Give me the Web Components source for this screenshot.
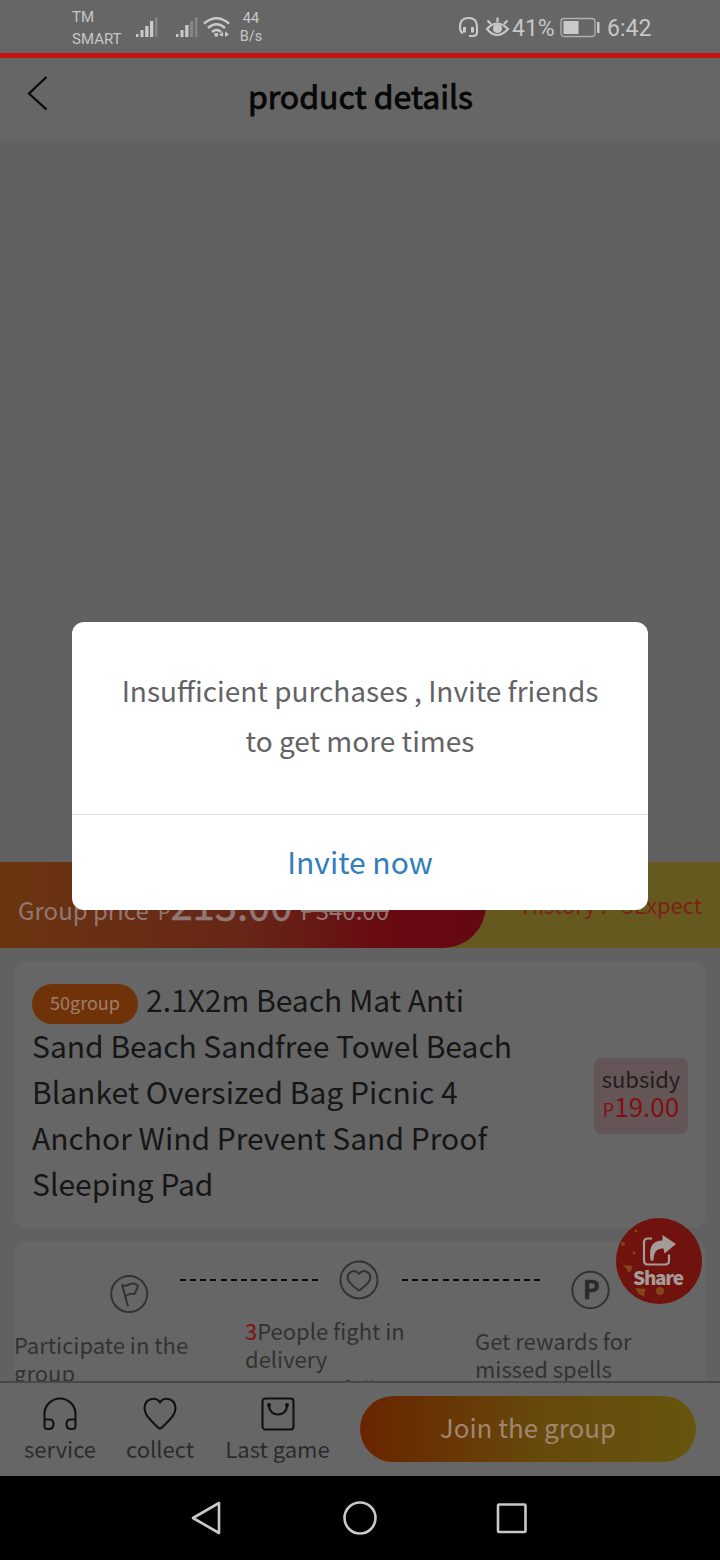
<!DOCTYPE html>
<html lang="en">
<head>
<meta charset="utf-8">
<title>product details</title>
<style>
body{margin:0;background:#666;font-family:"Noto Sans CJK SC","Noto Sans",sans-serif}
</style>
</head>
<body>
<phone-screen></phone-screen>
<script>
const define=(name,html)=>customElements.define(name,class extends HTMLElement{
  constructor(){
    super();
    const t=document.createElement('template');
    t.innerHTML=html;
    this.attachShadow({mode:'open'}).append(t.content.cloneNode(true));
  }
});

define('status-bar',`<style>
:host{display:flex;box-sizing:border-box;height:53px;padding-left:72px;background:#666;color:#c6c6c6;font:15px/22px Roboto,sans-serif;align-items:flex-start}
svg{display:block;flex:none}
.carrier{width:64px;padding-top:6px}
.speed{width:30px;text-align:center;font-size:14.5px;line-height:18px;padding-top:10px;margin-left:5px}
.big{font-size:23px;line-height:28px;padding-top:15px}
</style>
<div class="carrier">TM<br>SMART</div>
<svg width="24" height="53" fill="#c9c9c9"><path d="M0 34h2.500v3H0zM4.500 30h3v7h-3zM9.200 26h3.300v11H9.200zM14 21h3.300v16H14z"/><path fill="#858585" d="M19 17.500h2.500v19.500H19z"/></svg>
<svg width="24" height="53" style="margin-left:16px" fill="#c9c9c9"><path d="M0 34h2.500v3H0zM4.500 30h3v7h-3zM9.200 25h3.300v12H9.200z"/><path fill="#858585" d="M14 21h3.300v16H14zM19 17.500h2.500v19.500H19z"/></svg>
<svg width="28" height="53" style="margin-left:3px" fill="none" stroke="#c9c9c9" stroke-width="2.500"><path d="M1 23.500q12.500-10.500 25 0M5 28q8.500-7.500 17 0M9 32q4.500-4 9 0"/><path stroke="none" fill="#c9c9c9" d="M11.500 33h3.500v3.500h-3.500zM16 35l4-3.500v5zM22 31.500l4 2.800-4 2.700z"/></svg>
<div class="speed">44<br>B/s</div>
<svg width="22" height="53" style="margin-left:193px" fill="none" stroke="#c9c9c9" stroke-width="2.200"><path d="M4 33Q1 32 1 26.500Q1 18 9.500 18t8.500 8.500V32Q18 36 14 36H10"/><path stroke-width="3" d="M5.500 27v5.500M13.500 27v5.500"/></svg>
<svg width="24" height="53" style="margin-left:5px" fill="none" stroke="#c9c9c9" stroke-width="2.200"><path d="M1 29q10-11 21 0-11 12-21 0zM11.500 22v-4.500M5 24l-3.500-3.500M18 24l3.500-3.500"/><circle cx="11.500" cy="28.500" r="3.500" fill="#c9c9c9"/></svg>
<div class="big" style="width:48px;margin-left:2px">41%</div>
<svg width="40" height="53" fill="none" stroke="#b0b0b0" stroke-width="1.300"><rect x="1" y="18.500" width="34" height="18" rx="3"/><path fill="#c9c9c9" stroke="none" d="M3.500 21h15v13h-15zM37 22h2.500v11H37z"/></svg>
<div class="big" style="margin-left:7px">6:42</div>`);

define('page-header',`<style>
:host{display:flex;box-sizing:border-box;height:88px;border-top:5px solid #c5140f;background:#666;align-items:flex-start;color:#070707;position:relative}
svg{flex:none;margin:17px 0 0 26px}
h1{flex:1;margin:12px 49px 0 0;text-align:center;font-size:32px;line-height:50px;font-weight:400;-webkit-text-stroke:.9px #070707}
</style>
<svg width="24" height="38" fill="none" stroke="#0a0a0a" stroke-width="2.300"><path d="M20.500 2L3 18.500 20.500 34.500"/></svg>
<h1><slot></slot></h1>`);

define('price-bar',`<style>
:host{display:flex;height:86px;background:#66591f;color:#7d2118;line-height:44px}
.now{box-sizing:border-box;width:486px;padding:19px 0 0 18px;border-radius:0 44px 44px 0;background:linear-gradient(90deg,#6b3510 0%,#672617 50%,#680a12 80%,#640813);color:#917875;font-size:24px;white-space:nowrap;display:flex;align-items:baseline}
.p{font-size:20px;margin-left:9px}.n{font-size:40px;line-height:44px;-webkit-text-stroke:.5px #917875}
s{margin-left:8px;text-decoration:none;background:linear-gradient(#917875,#917875) 0 22px/100% 2px no-repeat}
.old{flex:1;text-align:right;padding:20px 18px 0 0;font-size:22px;white-space:pre}
</style>
<div class="now"><span>Group price</span><span class="p">P</span><span class="n">213.00</span><s>P340.00</s></div>
<div class="old">History :   3Expect</div>`);

define('subsidy-tag',`<style>
:host{display:block;flex:none;box-sizing:border-box;width:94px;height:76px;padding-top:6px;background:#645557;border-radius:8px;text-align:center;color:#241c1f;font-size:22px;line-height:28px}
div{color:#820f12;font-size:26px}small{font-size:18px}
</style><slot></slot><div><small>P</small>19.00</div>`);

define('product-card',`<style>
:host{display:flex;box-sizing:border-box;height:266px;margin:14px 14px 0;padding:14px 18px 0;background:#666;border-radius:12px;color:#161616;justify-content:space-between}
.t{width:490px;font-size:30px;line-height:46px}
.b{display:inline-block;vertical-align:top;width:106px;height:40px;margin:8px 8px -4px 0;border-radius:20px;background:#703309;color:#a07e68;font-size:18px;line-height:36px;text-align:center}
subsidy-tag{margin-top:82px}
</style>
<div class="t"><span class="b">50group</span><slot></slot></div><subsidy-tag>subsidy</subsidy-tag>`);

define('group-steps',`<style>
:host{display:grid;grid-template-columns:166px 138px 84px 138px 166px;box-sizing:border-box;height:139px;margin:14px 14px 0;overflow:hidden;background:#666;border-radius:12px 12px 0 0;color:#323232;font-size:22px;line-height:28px;white-space:nowrap}
svg{display:block;fill:none;stroke:#333;stroke-width:2;stroke-linejoin:round}
.a svg{margin:32px 0 0 95px}.a p{margin:14px 0 0}
.c svg{margin:18px 0 0 21px}.c p{margin:14px 0 0 -73px}
.c span{display:block;margin-top:2px}
.e svg{margin:28px 0 0 31px}.e p{margin:14px 0 0 -65px}
p{width:230px}
i{height:2px;margin-top:37px;background:repeating-linear-gradient(90deg,#080808 0 6px,transparent 6px 10.150px)}
b{font-weight:400;color:#82100f}
text{stroke:#2a2a2a;stroke-width:.5;fill:#2a2a2a;font:700 25px "Noto Sans CJK SC",sans-serif}
</style>
<div class="a"><svg width="40" height="42"><circle cx="20.200" cy="20" r="18"/><path d="M13 10.500q3 2 6 .5t5-1.500 5 2.200q-1 4-3.500 8.300-5-1-9.300 2.500M13 10.500l6 22"/></svg><p>Participate in the<br>group</p></div>
<i></i>
<div class="c"><svg width="42" height="42"><circle cx="20" cy="20" r="18.500"/><path d="M20 14c-4.500-6-13-1.500-11 5.500 1 4 7 8 11 11 4-3 10-7 11-11 2-7-6.500-11.500-11-5.500z"/></svg><p><b>3</b>People fight in<br>delivery<span>person is full</span></p></div>
<i></i>
<div class="e"><svg width="40" height="42"><circle cx="19.500" cy="20" r="18.200"/><text x="12" y="29">P</text></svg><p>Get rewards for<br>missed spells</p></div>`);

define('share-button',`<style>
:host{display:block;position:absolute;left:616px;top:1218px;width:86px;height:86px}
svg{display:block}text{font:900 19px "Noto Sans CJK SC",sans-serif;fill:#a59c9a}
</style>
<svg width="86" height="86"><circle cx="43" cy="43" r="43" fill="#70120d"/>
<g fill="#87451a"><circle cx="20" cy="13" r="1.500"/><circle cx="7" cy="26" r="2"/><circle cx="18" cy="35" r="1.500"/><path d="M7 47l9 1-1 5-3 2-1-4zM19 70l11 1-2 4 1 4-6-3z"/><circle cx="44" cy="73" r="4"/></g>
<path d="M36 20.500h-4q-4 0-4 4v18q0 4 4 4h17q4 0 4-4v-6" fill="none" stroke="#a59c9a" stroke-width="2.200"/>
<path d="M46.500 17l13.500 9-11.500 9.500-1-5q-10-.5-10 12-2.500 1-3-1-3-19 12-19z" fill="#a59c9a"/>
<text x="17" y="67" textLength="51">Share</text></svg>`);

define('tab-item',`<style>
:host{display:flex;flex-direction:column;align-items:center;height:93px;font-size:22px;line-height:28px;color:#2b2b2b;white-space:nowrap}
::slotted(svg){display:block;margin:14px 0 3px}
</style><slot name="icon"></slot><span><slot></slot></span>`);

define('action-bar',`<style>
:host{display:flex;box-sizing:border-box;height:95px;border-top:2px solid #484848;background:#666}
svg{fill:none;stroke:#111;stroke-width:2.100}
button{border:0;margin:13px 24px 0 auto;width:336px;height:66px;border-radius:33px;background:linear-gradient(90deg,#692400,#674a0c 55%,#66550d);color:#a08670;font:26px/60px "Noto Sans CJK SC",sans-serif;padding:0 0 4px}
</style>
<tab-item style="width:120px"><svg slot="icon" width="34" height="34"><path d="M1.500 23V17a15.500 15.500 0 0 1 31 0v6M1.500 22.500h5q4 0 4 4.500t-4 5h-2q-3 0-3-3zM32.500 22.500h-5q-4 0-4 4.500t4 5h2q3 0 3-3z"/></svg>service</tab-item>
<tab-item style="width:80px"><svg slot="icon" width="34" height="34"><path d="M17 5.500C12.500-1 2 1.500 1.500 11c0 7 5 11 13.500 19.500q2 2 4 0C27.500 22 32.500 18 32.500 11 32 1.500 21.500-1 17 5.500z"/></svg>collect</tab-item>
<tab-item style="width:155px"><svg slot="icon" width="34" height="34"><rect x="1.500" y="1.500" width="31" height="31" rx="3"/><path d="M8 8.500c0 12 18 12 18 0"/><circle cx="8" cy="8" r="1" fill="#111"/><circle cx="26" cy="8" r="1" fill="#111"/></svg>Last game</tab-item>
<button>Join the group</button>`);

define('nav-bar',`<style>
:host{display:flex;height:84px;background:#000;justify-content:center;align-items:center;gap:116px}
svg{fill:none;stroke:#c8c8c8;stroke-width:2.600;display:block}
</style>
<svg width="36" height="36"><path stroke-linejoin="round" d="M29 3v30L3 18z"/></svg>
<svg width="36" height="36"><circle cx="18" cy="18" r="15.500"/></svg>
<svg width="36" height="36"><rect x="4" y="4.500" width="27.500" height="27.500" rx="1"/></svg>`);

define('invite-dialog',`<style>
:host{display:flex;flex-direction:column;box-sizing:border-box;position:absolute;left:72px;top:622px;width:576px;height:288px;border-radius:12px;background:#fff;text-align:center}
.m{box-sizing:border-box;height:192px;padding-top:43px;font-size:28px;line-height:50px;color:#636366}
.f{flex:1;border-top:1px solid #e4e4e4;color:#327dbc;font-size:30px;line-height:93px}
</style><div class="m"><slot></slot></div><div class="f"><slot name="action"></slot></div>`);

define('phone-screen',`<style>
:host{display:flex;flex-direction:column;position:relative;width:720px;height:1560px;overflow:hidden;background:#616161}
:host>*{flex:none}
.photo{height:721px}
</style>
<status-bar></status-bar><page-header>product details</page-header>
<div class="photo"></div>
<price-bar></price-bar>
<product-card>2.1X2m Beach Mat Anti Sand Beach Sandfree Towel Beach Blanket Oversized Bag Picnic 4 Anchor Wind Prevent Sand Proof Sleeping Pad</product-card>
<group-steps></group-steps>
<action-bar></action-bar>
<nav-bar></nav-bar>
<share-button></share-button>
<invite-dialog>Insufficient purchases , Invite friends<br>to get more times<span slot="action">Invite now</span></invite-dialog>`);
</script>
</body>
</html>
